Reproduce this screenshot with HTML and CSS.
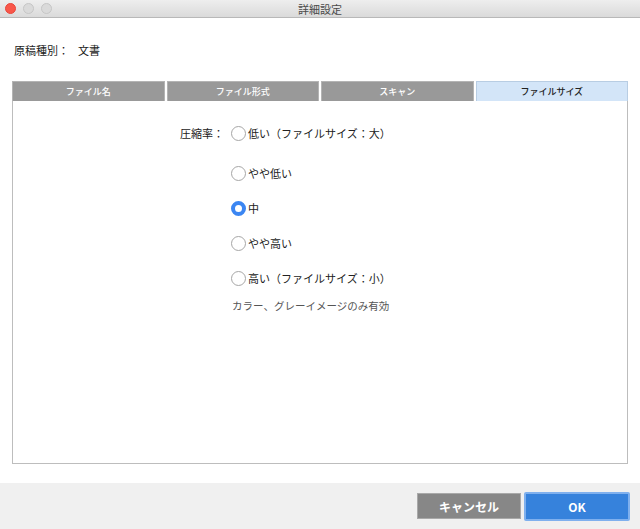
FILE: index.html
```html
<!DOCTYPE html>
<html lang="ja">
<head>
<meta charset="utf-8">
<link rel="stylesheet" href="styles.css">
</head>
<body>
<div class="window">
  <div class="titlebar">
    <div class="lights">
      <span class="light red"></span>
      <span class="light"></span>
      <span class="light"></span>
    </div>
    <div class="title">詳細設定</div>
  </div>
  <div class="content">
    <div class="doctype"><span>原稿種別：</span><span class="doc-val">文書</span></div>
    <div class="tabs">
      <div class="tab">ファイル名</div>
      <div class="tab">ファイル形式</div>
      <div class="tab">スキャン</div>
      <div class="tab active">ファイルサイズ</div>
    </div>
    <div class="panel">
      <div class="field">
        <div class="label">圧縮率：</div>
        <div class="options">
          <label class="opt first"><span class="radio"></span>低い（ファイルサイズ：大）</label>
          <label class="opt"><span class="radio"></span>やや低い</label>
          <label class="opt"><span class="radio checked"></span>中</label>
          <label class="opt"><span class="radio"></span>やや高い</label>
          <label class="opt"><span class="radio"></span>高い（ファイルサイズ：小）</label>
          <div class="note">カラー、グレーイメージのみ有効</div>
        </div>
      </div>
    </div>
  </div>
  <div class="footer">
    <button class="btn cancel">キャンセル</button>
    <button class="btn ok">OK</button>
  </div>
</div>
</body>
</html>
```

FILE: styles.css
```css
* { box-sizing: border-box; }
html, body { margin: 0; padding: 0; }
body {
  width: 640px;
  height: 529px;
  overflow: hidden;
  font-family: "Noto Sans CJK JP", "Noto Sans", sans-serif;
  color: #222;
  background: #fff;
}
.window { display: flex; flex-direction: column; height: 529px; }
.titlebar {
  height: 18px;
  position: relative;
  background: linear-gradient(#eeeeee, #dadada);
  border-bottom: 1px solid #b8b8b8;
  display: flex;
  align-items: center;
  justify-content: center;
}
.lights {
  position: absolute;
  left: 5px;
  top: 3px;
  display: flex;
  gap: 7px;
}
.light {
  width: 11px;
  height: 11px;
  border-radius: 50%;
  background: #dadada;
  border: 1px solid #c6c6c6;
}
.light.red { background: #f9574a; border-color: #e8463a; }
.title { font-size: 11px; color: #4a4a4a; line-height: 18px; }
.content {
  flex: 1;
  padding: 0 12px 19px 12px;
  display: flex;
  flex-direction: column;
}
.doctype {
  font-size: 11px;
  margin-top: 23px;
  margin-left: 2px;
  height: 18px;
  line-height: 18px;
  display: flex;
}
.doc-val { margin-left: 9px; }
.tabs {
  margin-top: 22px;
  display: grid;
  grid-template-columns: repeat(4, 1fr);
  gap: 2px;
}
.tab {
  height: 20px;
  background: #999;
  border: 1px solid #b4b4b4;
  border-bottom: none;
  color: #fff;
  font-size: 9px;
  font-weight: 500;
  text-align: center;
  line-height: 19px;
}
.tab.active {
  background: #d3e5f8;
  border-color: #b8cde3;
  color: #222;
}
.panel {
  flex: 1;
  border: 1px solid #bdbdbd;
  border-top: none;
}
.field {
  display: flex;
  margin-top: 22px;
}
.label {
  width: 218px;
  text-align: right;
  font-size: 11px;
  line-height: 20px;
  padding-right: 7px;
}
.options { display: flex; flex-direction: column; }
.opt {
  display: flex;
  align-items: center;
  font-size: 11px;
  height: 20px;
  margin-bottom: 15px;
}
.opt.first { margin-bottom: 20px; }
.radio {
  width: 15px;
  height: 15px;
  border-radius: 50%;
  border: 1px solid #a6a6a6;
  background: #fff;
  margin-right: 2px;
  display: inline-block;
}
.radio.checked {
  border: 4.5px solid #3b86f2;
  background: #fff;
}
.note {
  font-size: 10.5px;
  color: #555;
  margin-top: -5px;
  margin-left: 1px;
}
.footer {
  height: 46px;
  background: #f0f0f0;
  display: flex;
  justify-content: flex-end;
  align-items: center;
  padding-right: 10px;
  gap: 3px;
}
.btn {
  font-family: "Noto Sans CJK JP", "Noto Sans", sans-serif;
  font-weight: bold;
  font-size: 12px;
  color: #fff;
  border: none;
  margin: 0;
  padding: 0;
}
.cancel {
  width: 104px;
  height: 26px;
  background: #878787;
  border: 1px solid #a9a9a9;
}
.ok {
  width: 106px;
  height: 29px;
  background: #3682dc;
  border: 2px solid #7fb0ee;
  border-radius: 2px;
}
```
